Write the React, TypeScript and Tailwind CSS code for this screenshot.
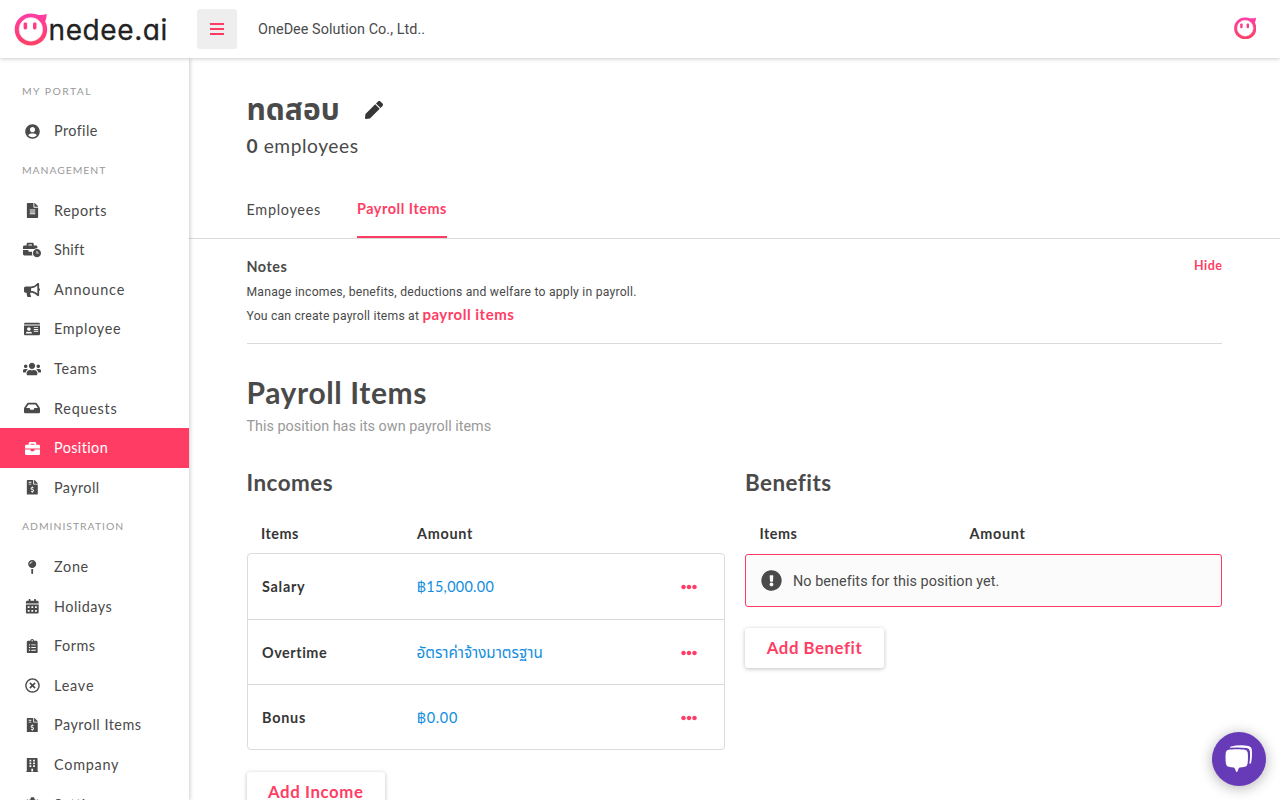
import type { IconType } from "react-icons";
import {
  FaUserCircle, FaFileAlt, FaBusinessTime, FaBullhorn, FaIdCard, FaUsers, FaInbox, FaBriefcase,
  FaFileInvoiceDollar, FaMapPin, FaCalendarAlt, FaClipboardList, FaRegTimesCircle, FaBuilding, FaCog,
  FaEllipsisH, FaExclamationCircle, FaPen,
} from "react-icons/fa";

type NavRow = { label: string; track: string; icon?: IconType; active?: boolean; size?: number };

const nav: NavRow[] = [
  { label: "MY PORTAL", track: "tracking-[1.45px]" },
  { label: "Profile", icon: FaUserCircle, size: 15, track: "tracking-[0.4px]" },
  { label: "MANAGEMENT", track: "tracking-[0.95px]" },
  { label: "Reports", icon: FaFileAlt, size: 15, track: "tracking-[0.6px]" },
  { label: "Shift", icon: FaBusinessTime, size: 18, track: "tracking-[0.25px]" },
  { label: "Announce", icon: FaBullhorn, size: 16, track: "tracking-[0.85px]" },
  { label: "Employee", icon: FaIdCard, size: 16, track: "tracking-[0.7px]" },
  { label: "Teams", icon: FaUsers, size: 18, track: "tracking-[0.7px]" },
  { label: "Requests", icon: FaInbox, size: 16, track: "tracking-[0.75px]" },
  { label: "Position", icon: FaBriefcase, size: 15, active: true, track: "tracking-[0.4px]" },
  { label: "Payroll", icon: FaFileInvoiceDollar, size: 14.6, track: "tracking-[0.4px]" },
  { label: "ADMINISTRATION", track: "tracking-[1px]" },
  { label: "Zone", icon: FaMapPin, size: 14.4, track: "tracking-[0.7px]" },
  { label: "Holidays", icon: FaCalendarAlt, size: 14.6, track: "tracking-[0.5px]" },
  { label: "Forms", icon: FaClipboardList, size: 14.4, track: "tracking-[0.5px]" },
  { label: "Leave", icon: FaRegTimesCircle, size: 15, track: "tracking-[0.8px]" },
  { label: "Payroll Items", icon: FaFileInvoiceDollar, size: 14.6, track: "tracking-[0.5px]" },
  { label: "Company", icon: FaBuilding, size: 14.4, track: "tracking-[0.75px]" },
  { label: "Settings", icon: FaCog, size: 15, track: "tracking-[0.5px]" },
];

const incomes = [
  { name: "Salary", height: "h-[66px]", nameTrack: "tracking-[0.75px]", amount: "฿15,000.00", amountStyle: "text-[14.4px] tracking-[0.3px]" },
  { name: "Overtime", height: "h-[65px]", nameTrack: "tracking-[0.55px]", amount: "อัตราค่าจ้างมาตรฐาน", amountStyle: "text-[15.2px]" },
  { name: "Bonus", height: "h-[64px]", nameTrack: "tracking-[0.75px]", amount: "฿0.00", amountStyle: "text-[14.4px] tracking-[0.7px]" },
];

function Mascot({ className, id }: { className: string; id: string }) {
  return (
    <svg viewBox="0 0 33 33" className={className}>
      <defs>
        <linearGradient id={id} x1="0" y1="0" x2="0" y2="1">
          <stop offset="0" stopColor="#ff3da6" />
          <stop offset="1" stopColor="#ff4064" />
        </linearGradient>
      </defs>
      <path
        fill={`url(#${id})`}
        d="M16.3 0.6C19.6 0.6 22 1.6 24.4 1.9C27 2.1 29.8 1.6 32.2 1C32.2 4.2 31.4 6.4 30.6 8.6C32 11 32.7 13.6 32.7 16.6C32.7 25.8 25.6 32.6 16.4 32.6C7.2 32.6 0.2 25.6 0.2 16.6C0.2 7.6 7.2 0.6 16.3 0.6Z"
      />
      <circle cx="16.4" cy="16.4" r="11.8" fill="#fff" stroke="#e9dfe4" strokeWidth="0.6" />
      <rect x="9.1" y="9.4" width="3.5" height="7" rx="1.4" fill="#ff3d85" />
      <rect x="18.5" y="9.4" width="3.5" height="7" rx="1.4" fill="#ff3d85" />
    </svg>
  );
}

function ChatIcon() {
  return (
    <svg viewBox="0 0 28 28" className="size-7">
      <path
        fill="#fff"
        d="M3.4 4.8C7.5 4.1 16.5 4.1 20 4.8Q22.4 5.2 22.7 7.6Q23.3 13 22.6 18.6Q22.3 21.2 20 21.7Q17.4 22.2 14.6 22.4Q13.4 23 12.9 25.4Q11.7 28.4 10.6 25.4Q10 23 8.8 22.4Q6 22.2 3.6 21.7Q1.2 21.2 .9 18.6Q.2 13 .8 7.6Q1.1 5.2 3.4 4.8Z"
      />
      <path
        fill="#fff"
        d="M5.2 1.8Q14 -.6 23.4 .9Q26.4 1.5 26.8 4.6Q27.4 11.5 26.2 17.4Q25.6 18.8 24.4 18.6Q25.4 12 24.9 6.2Q24.6 3.4 21.8 3Q13.6 2 5.6 2.8Q4.6 2.4 5.2 1.8Z"
      />
    </svg>
  );
}

function HeadRow({ gap }: { gap: string }) {
  return (
    <div className="mt-[14px] flex h-[40px] items-center pt-px pl-[14.5px] text-[14.4px] font-bold text-[#363636]">
      <span className={gap + " tracking-[0.5px]"}>Items</span>
      <span className="tracking-[0.7px]">Amount</span>
    </div>
  );
}

export default function App() {
  return (
    <div className="relative flex h-[800px] w-[1280px] flex-col overflow-hidden bg-white font-['Lato','Noto_Sans_Thai',sans-serif] text-[#4a4a4a]">
      <header className="relative z-20 flex h-[58px] shrink-0 items-center bg-white shadow-[0_1px_4px_rgba(0,0,0,0.2)]">
        <div className="flex w-[197px] items-center pl-[13.5px]">
          <Mascot id="logo" className="h-[33px] w-[34px]" />
          <span className="ml-px pt-[2px] font-['Inter'] text-[28px] leading-none tracking-[0.6px] text-[#222] [-webkit-text-stroke:0.3px_#222] [font-feature-settings:'cv11']">nedee.ai</span>
        </div>
        <div className="flex size-10 items-center justify-center rounded-[3px] bg-[#eee]">
          <svg className="h-3 w-3.5" viewBox="0 0 14 12" fill="#ff3d64"><path d="M0 0h14v2H0zM0 5h14v2H0zM0 10h14v2H0z" /></svg>
        </div>
        <span className="ml-[21px] pt-[2px] font-['Roboto'] text-[14.4px] tracking-[0.05px]">OneDee Solution Co., Ltd..</span>
        <Mascot id="avatar" className="mr-[24px] mb-[2px] ml-auto size-[22.5px]" />
      </header>
      <div className="flex min-h-0 flex-1">
        <aside className="z-10 w-[189px] shrink-0 overflow-hidden bg-white pt-[13.9px] shadow-[1px_0_4px_rgba(0,0,0,0.2)]">
          {nav.map(({ label, track, icon: Icon, active, size }) =>
            Icon ? (
              <div key={label} className={"flex h-[39.6px] items-center " + (active ? "bg-[#ff3d64] text-white" : "")}>
                <span className="ml-[20px] flex w-6 justify-center"><Icon size={size} /></span>
                <span className={"ml-[10px] text-[14.4px] " + track}>{label}</span>
              </div>
            ) : (
              <div key={label} className="flex h-[39.6px] items-center pl-[22px] text-[10.4px] text-[#999]">
                <span className={track}>{label}</span>
              </div>
            ),
          )}
        </aside>
        <main className="min-w-0 flex-1 overflow-hidden">
          <div className="flex h-[74px] items-end pl-[57.5px]">
            <div className="flex h-11 items-center">
              <h1 className="pb-[3px] text-[30px] font-bold">ทดสอบ</h1>
              <FaPen className="ml-[25px] size-[18px] text-[#363636]" />
            </div>
          </div>
          <p className="flex h-7 items-center pl-[57.5px] text-[19.2px] tracking-[0.55px]"><span><b>0</b> employees</span></p>
          <nav className="flex h-[79px] items-end border-b border-[#dbdbdb] pl-[57.5px] text-[14.4px]">
            <span className="mr-9 h-[56px] leading-[56px] tracking-[0.72px]">Employees</span>
            <span className="h-[56px] border-b-2 border-[#ff3d64] leading-[54px] font-bold tracking-[0.55px] text-[#ff3d64]">Payroll Items</span>
          </nav>
          <div className="mr-[58px] ml-[57.5px]">
            <section className="h-[105px] border-b border-[#dbdbdb] pt-[16px]">
              <div className="flex h-6 items-center justify-between font-bold tracking-[0.5px]">
                <span className="text-[14.4px]">Notes</span>
                <span className="-mr-[0.5px] mb-px text-[12.5px] text-[#ff3d64]">Hide</span>
              </div>
              <p className="h-[23px] font-['Roboto'] text-[12.2px] leading-[27px] tracking-[0.21px]">Manage incomes, benefits, deductions and welfare to apply in payroll.</p>
              <p className="h-[23px] font-['Roboto'] text-[12.2px] leading-[24px] tracking-[0.2px]">You can create payroll items at <b className="font-['Lato'] text-[15px] tracking-[0.5px] text-[#ff3d64]">payroll items</b></p>
            </section>
            <h2 className="mt-[26px] flex h-11 items-center pt-px text-[30px] font-bold tracking-[0.6px]">Payroll Items</h2>
            <p className="flex h-6 items-center pt-px font-['Roboto'] text-[14.4px] text-[#999]">This position has its own payroll items</p>
            <div className="mt-[29px] flex gap-5">
              <section className="w-[478.5px]">
                <h3 className="flex h-8 items-center text-[22.4px] font-bold tracking-[0.5px]">Incomes</h3>
                <HeadRow gap="w-[156px]" />
                <div className="divide-y divide-[#dbdbdb] rounded-[4px] border border-[#dbdbdb]">
                  {incomes.map((r) => (
                    <div key={r.name} className={"flex items-center pt-px pr-[27px] pl-[14.5px] " + r.height}>
                      <span className={"w-[154.5px] text-[14.4px] font-bold text-[#363636] " + r.nameTrack}>{r.name}</span>
                      <span className={"text-[#118de0] " + r.amountStyle}>{r.amount}</span>
                      <FaEllipsisH size={16} className="ml-auto text-[#ff3d64]" />
                    </div>
                  ))}
                </div>
                <button className="mt-[22px] h-10 w-[138.5px] rounded-[3px] pb-px text-[16.8px] font-bold tracking-[0.6px] text-[#ff3d64] shadow-[0_1px_4px_rgba(0,0,0,0.25)]">Add Income</button>
              </section>
              <section className="w-[477px]">
                <h3 className="flex h-8 items-center text-[22.4px] font-bold tracking-[0.45px]">Benefits</h3>
                <HeadRow gap="w-[210px]" />
                <div className="mt-px flex h-[53px] items-center rounded-[3px] border border-[#ff3d64] bg-[#fbfbfb] pl-[15px] font-['Roboto'] text-[14.4px]">
                  <FaExclamationCircle size={21} className="mr-[11px]" />
                  <span className="pt-[2px] tracking-[0.06px]">No benefits for this position yet.</span>
                </div>
                <button className="mt-[21px] h-10 w-[139px] rounded-[3px] pb-px text-[16.8px] font-bold tracking-[0.55px] text-[#ff3d64] shadow-[0_1px_4px_rgba(0,0,0,0.25)]">Add Benefit</button>
              </section>
            </div>
          </div>
        </main>
      </div>
      <div className="absolute top-[732px] left-[1212px] z-30 flex size-[54px] items-center justify-center rounded-full bg-[#673ab7] shadow-[0_2px_14px_rgba(0,0,0,0.3)]">
        <ChatIcon />
      </div>
    </div>
  );
}
